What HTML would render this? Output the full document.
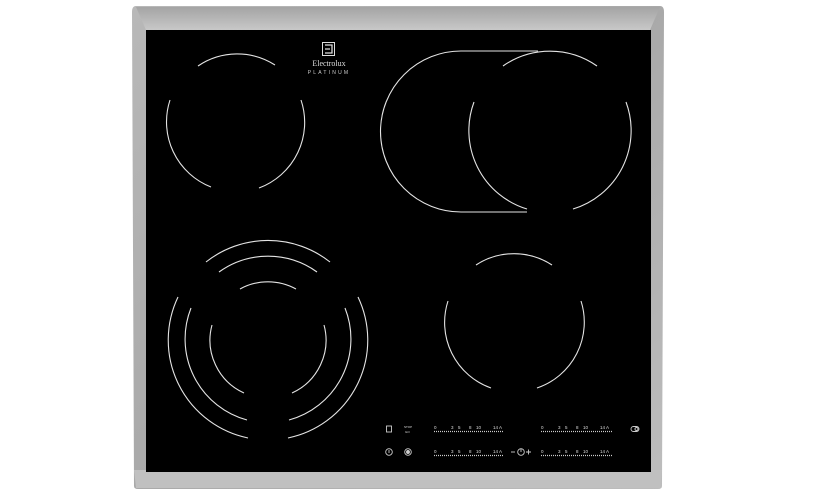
<!DOCTYPE html>
<html><head><meta charset="utf-8"><style>
html,body{margin:0;padding:0;background:#fff;width:834px;height:492px;overflow:hidden}
svg{display:block}
</style></head><body>
<svg width="834" height="492" viewBox="0 0 834 492" xmlns="http://www.w3.org/2000/svg">
<defs>
<linearGradient id="fr" x1="0" y1="0" x2="1" y2="1">
<stop offset="0" stop-color="#b8b8b8"/><stop offset="0.5" stop-color="#a9a9a9"/><stop offset="1" stop-color="#bdbdbd"/>
</linearGradient>
<linearGradient id="tp" x1="0" y1="0" x2="0" y2="1">
<stop offset="0" stop-color="#a4a4a4"/><stop offset="1" stop-color="#c8c8c8"/>
</linearGradient>
</defs>
<path d="M136,6 L660,6 Q664,6 664,12 L662,486 Q662,489 658,489 L138,489 Q134,489 134,486 L132,12 Q132,6 136,6 Z" fill="url(#fr)"/>
<path d="M136,7 L660,7 L650,30 L146,30 Z" fill="url(#tp)"/>
<path d="M134,470 L662,470 L660,488 L136,488 Z" fill="#c0c0c0"/>
<rect x="146" y="30" width="505" height="442" fill="#000"/>
<g fill="none" stroke="#e4e4e4" stroke-width="1.1">
<path d="M198,66 A70,70 0 0 1 275,65"/>
<path d="M211,187 A70,70 0 0 1 170,100"/>
<path d="M301,100 A70,70 0 0 1 259,188"/>
<path d="M538,51 L461,51 A80.5,80.5 0 0 0 461,212 L527,212"/>
<path d="M503,66 A82,82 0 0 1 597,66"/>
<path d="M474,102 A82,82 0 0 0 527,209"/>
<path d="M626,102 A82,82 0 0 1 573,209"/>
<path d="M206,262 A100,100 0 0 1 330,262"/>
<path d="M178,297 A100,100 0 0 0 248,438"/>
<path d="M358,297 A100,100 0 0 1 288,438"/>
<path d="M219,272 A84,84 0 0 1 317,272"/>
<path d="M191,308 A84,84 0 0 0 247,420"/>
<path d="M345,308 A84,84 0 0 1 289,420"/>
<path d="M240,289 A58,58 0 0 1 296,289"/>
<path d="M212,325 A58,58 0 0 0 244,393"/>
<path d="M324,325 A58,58 0 0 1 292,393"/>
<path d="M476,265 A69.5,69.5 0 0 1 552,265"/>
<path d="M448,301 A69.5,69.5 0 0 0 491,388"/>
<path d="M581,301 A69.5,69.5 0 0 1 537,388"/>
</g>
<rect x="322.5" y="42.5" width="12" height="13" fill="none" stroke="#ddd" stroke-width="1"/>
<path d="M325,45 L332,45 L332,53 L325,53 M325,49 L330,49" stroke="#ddd" stroke-width="1.3" fill="none"/>
<text x="329" y="66" font-family="Liberation Serif,serif" font-size="8" fill="#ddd" text-anchor="middle">Electrolux</text>
<text x="329" y="74" font-family="Liberation Sans,sans-serif" font-size="5" letter-spacing="2.2" fill="#ccc" text-anchor="middle">PLATINUM</text>
<g font-family="Liberation Sans,sans-serif" font-size="4.5" fill="#ddd">
<text x="434" y="429">0</text><text x="451" y="429">3</text><text x="458" y="429">5</text><text x="469" y="429">8</text><text x="476" y="429">10</text><text x="493" y="429">14 A</text>
<text x="541" y="429">0</text><text x="558" y="429">3</text><text x="565" y="429">5</text><text x="576" y="429">8</text><text x="583" y="429">10</text><text x="600" y="429">14 A</text>
<text x="434" y="453">0</text><text x="451" y="453">3</text><text x="458" y="453">5</text><text x="469" y="453">8</text><text x="476" y="453">10</text><text x="493" y="453">14 A</text>
<text x="541" y="453">0</text><text x="558" y="453">3</text><text x="565" y="453">5</text><text x="576" y="453">8</text><text x="583" y="453">10</text><text x="600" y="453">14 A</text>
<text x="404" y="428" font-size="3">STOP</text><text x="405" y="433" font-size="3">GO</text>
</g>
<g stroke="#ccc" stroke-width="1.2" stroke-dasharray="1 1" fill="none">
<path d="M434,431.5 H503"/><path d="M541,431.5 H612"/><path d="M434,455.5 H503"/><path d="M541,455.5 H612"/>
</g>
<g stroke="#ccc" stroke-width="0.9" fill="none">
<rect x="386.5" y="426" width="5" height="6"/>
<circle cx="389" cy="452" r="3.3"/><path d="M389,450 V453"/>
<circle cx="408" cy="452" r="3.3"/><circle cx="408" cy="452" r="1.5" fill="#ccc"/>
<path d="M511,452 H515"/>
<circle cx="521" cy="452" r="3.3"/><path d="M521,449 V452"/>
<path d="M526,452 H531 M528.5,449.5 V454.5"/>
<rect x="631" y="426.5" width="8" height="5" rx="2.5"/><circle cx="636.5" cy="429" r="1.5"/>
</g>
</svg>
</body></html>
